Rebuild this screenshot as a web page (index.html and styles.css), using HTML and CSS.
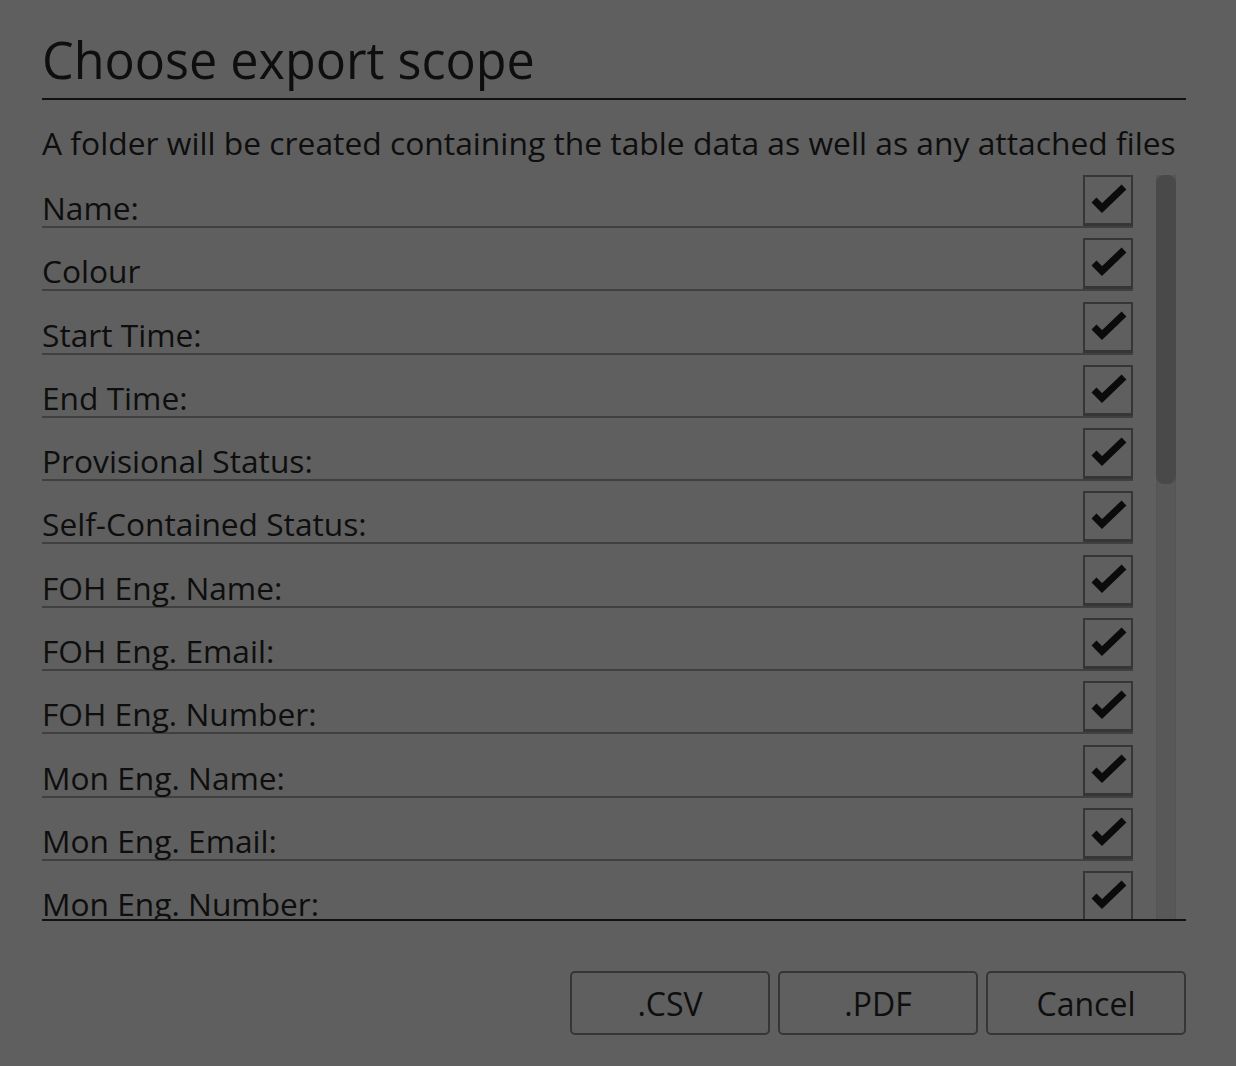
FILE: index.html
```html
<html>
	<head>
		<title>Choose export scope</title>
		<meta charset="UTF-8">
		<link rel="stylesheet" href="styles.css">
	</head>
	<body>

		<div id="exportDialog">
			<div class="dialog_title">Choose export scope</div>
			<div class="dialog_desc">A folder will be created containing the table data as well as any attached files</div>

			<div class="list_wrap">
				<div id="fieldList">
					<div class="field_row"><span class="field_name">Name:</span><span class="tick"><svg viewBox="0 0 46 46"><path d="M9 23 L17 31 L39 10"/></svg></span></div>
					<div class="field_row"><span class="field_name">Colour</span><span class="tick"><svg viewBox="0 0 46 46"><path d="M9 23 L17 31 L39 10"/></svg></span></div>
					<div class="field_row"><span class="field_name">Start Time:</span><span class="tick"><svg viewBox="0 0 46 46"><path d="M9 23 L17 31 L39 10"/></svg></span></div>
					<div class="field_row"><span class="field_name">End Time:</span><span class="tick"><svg viewBox="0 0 46 46"><path d="M9 23 L17 31 L39 10"/></svg></span></div>
					<div class="field_row"><span class="field_name">Provisional Status:</span><span class="tick"><svg viewBox="0 0 46 46"><path d="M9 23 L17 31 L39 10"/></svg></span></div>
					<div class="field_row"><span class="field_name">Self-Contained Status:</span><span class="tick"><svg viewBox="0 0 46 46"><path d="M9 23 L17 31 L39 10"/></svg></span></div>
					<div class="field_row"><span class="field_name">FOH Eng. Name:</span><span class="tick"><svg viewBox="0 0 46 46"><path d="M9 23 L17 31 L39 10"/></svg></span></div>
					<div class="field_row"><span class="field_name">FOH Eng. Email:</span><span class="tick"><svg viewBox="0 0 46 46"><path d="M9 23 L17 31 L39 10"/></svg></span></div>
					<div class="field_row"><span class="field_name">FOH Eng. Number:</span><span class="tick"><svg viewBox="0 0 46 46"><path d="M9 23 L17 31 L39 10"/></svg></span></div>
					<div class="field_row"><span class="field_name">Mon Eng. Name:</span><span class="tick"><svg viewBox="0 0 46 46"><path d="M9 23 L17 31 L39 10"/></svg></span></div>
					<div class="field_row"><span class="field_name">Mon Eng. Email:</span><span class="tick"><svg viewBox="0 0 46 46"><path d="M9 23 L17 31 L39 10"/></svg></span></div>
					<div class="field_row"><span class="field_name">Mon Eng. Number:</span><span class="tick"><svg viewBox="0 0 46 46"><path d="M9 23 L17 31 L39 10"/></svg></span></div>
					<div class="field_row"><span class="field_name">Stage Manager Name:</span><span class="tick"><svg viewBox="0 0 46 46"><path d="M9 23 L17 31 L39 10"/></svg></span></div>
					<div class="field_row"><span class="field_name">Stage Manager Email:</span><span class="tick"><svg viewBox="0 0 46 46"><path d="M9 23 L17 31 L39 10"/></svg></span></div>
					<div class="field_row"><span class="field_name">Notes:</span><span class="tick"><svg viewBox="0 0 46 46"><path d="M9 23 L17 31 L39 10"/></svg></span></div>
				</div>
				<div class="scroll_track"><div class="scroll_thumb"></div></div>
			</div>

			<div class="dialog_buttons">
				<button class="dlg_btn">.CSV</button>
				<button class="dlg_btn">.PDF</button>
				<button class="dlg_btn">Cancel</button>
			</div>
		</div>

	</body>
</html>
```

FILE: styles.css
```css
body {
	margin: 0px;
	padding: 0px;
	overflow: hidden;
	background-color: #5f5f5f;
	color: #0e0e0e;
	font-family: 'Open Sans', 'Noto Sans', sans-serif;
}

#exportDialog {
	display: flex;
	flex-direction: column;
	height: 1066px;
	box-sizing: border-box;
	padding: 22px 50px 31px 42px;
}

.dialog_title {
	font-size: 50.3px;
	line-height: 76px;
	border-bottom: 2px solid #111;
	margin-bottom: 21px;
}

.dialog_desc {
	font-size: 31.8px;
	line-height: 44px;
	margin-bottom: 10px;
	white-space: nowrap;
}

.list_wrap {
	display: flex;
	height: 744px;
	border-bottom: 2px solid #111;
}

#fieldList {
	flex: 1;
	overflow: hidden;
	margin-right: 23px;
}

.scroll_track {
	width: 20px;
	margin-right: 10px;
	box-sizing: border-box;
	background-color: #585858;
	border-left: 1px solid #545454;
	border-right: 1px solid #545454;
}
.scroll_thumb {
	height: 309px;
	margin: 0px -1px;
	background-color: #494949;
	border-radius: 8px;
}

.field_row {
	display: flex;
	align-items: flex-end;
	justify-content: space-between;
	margin-bottom: 10.3px;
	border-bottom: 2px solid #404040;
}

.field_name {
	font-size: 31.7px;
	line-height: 32px;
	padding-bottom: 2px;
	white-space: nowrap;
}

.tick {
	width: 50px;
	height: 51px;
	box-sizing: border-box;
	border: 2px solid #363636;
	border-bottom-width: 3px;
	display: flex;
}
.tick svg {
	width: 46px;
	height: 46px;
	fill: none;
	stroke: #0b0b0b;
	stroke-width: 7;
}

.dialog_buttons {
	display: flex;
	justify-content: flex-end;
	gap: 8px;
	margin-top: auto;
}

.dlg_btn {
	width: 200px;
	height: 64px;
	background-color: transparent;
	border: 2px solid #363636;
	border-radius: 5px;
	color: #0e0e0e;
	font-family: 'Open Sans', 'Noto Sans', sans-serif;
	font-size: 32px;
	padding: 0px;
}
```
